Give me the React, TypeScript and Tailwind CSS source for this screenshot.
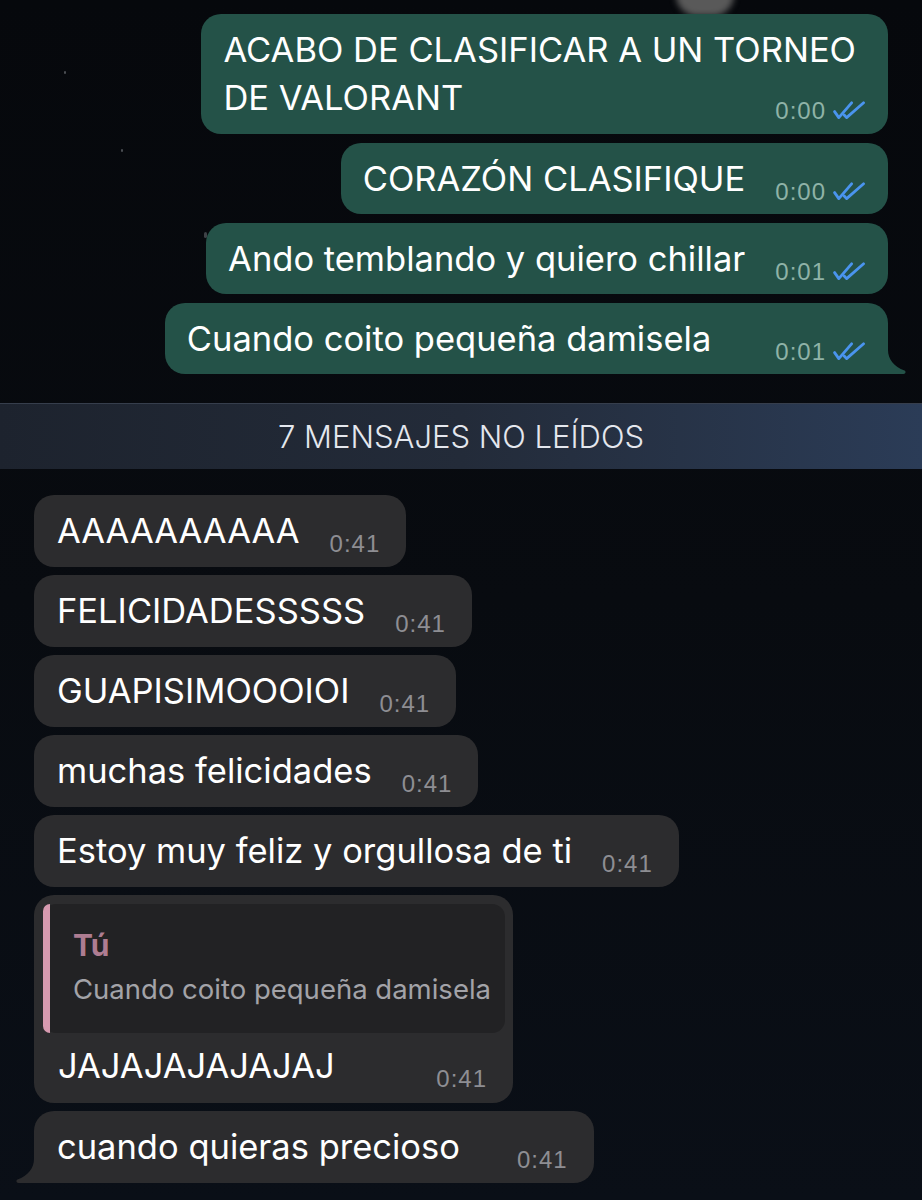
import React from "react";

const FONT = "font-['Inter','Liberation_Sans',Arial,sans-serif]";
const TIMEFONT = "font-['Liberation_Sans',Arial,sans-serif]";

function Checks() {
  return (
    <svg width="33" height="19" viewBox="0 0 33 19" fill="none" className="block">
      <path d="M1.6 10.6 L5.8 16.6 L18.6 1.8" stroke="#4a94ee" strokeWidth="2.8" strokeLinecap="round" strokeLinejoin="round" />
      <path d="M11.2 14 L13.6 16.6 L30.6 1.8" stroke="#4a94ee" strokeWidth="2.8" strokeLinecap="round" strokeLinejoin="round" />
    </svg>
  );
}

function OutTime({ time, wide }: { time: string; wide?: boolean }) {
  return (
    <span className={`mb-[1px] flex shrink-0 items-end gap-[7px] ${wide ? "ml-[64px]" : "ml-[30px]"} ${TIMEFONT}`}>
      <span className="text-[24px] leading-[18px] tracking-[1px] text-[#8fb3a7]">{time}</span>
      <Checks />
    </span>
  );
}

function Out({ text, time, tail, wide }: { text: string; time: string; tail?: boolean; wide?: boolean }) {
  return (
    <div
      className={`relative flex items-end rounded-[20px] bg-[#245248] pb-[12px] pl-[22px] pr-[22px] pt-[12px] ${
        tail ? "rounded-br-[4px]" : ""
      }`}
    >
      <span className="whitespace-nowrap text-[34.5px] leading-[47px] text-white">{text}</span>
      <OutTime time={time} wide={wide} />
      {tail && (
        <svg width="24" height="24" viewBox="0 0 24 24" className="absolute bottom-0 right-[-19px]">
          <path d="M5 0 C5 9 11 17 21.5 20.5 C23 21 23 24 20.5 24 L0 24 L0 0 Z" fill="#245248" />
        </svg>
      )}
    </div>
  );
}

function InTime({ time, wide }: { time: string; wide?: boolean }) {
  return (
    <span
      className={`mb-[1px] shrink-0 text-[24px] leading-[18px] tracking-[1px] text-[#8e8e93] ${
        wide ? "ml-[57px]" : "ml-[30px]"
      } ${TIMEFONT}`}
    >
      {time}
    </span>
  );
}

function In({ text, time, tail, wide }: { text: string; time: string; tail?: boolean; wide?: boolean }) {
  return (
    <div
      className={`relative flex items-end rounded-[20px] bg-[#2c2c2e] pb-[13px] pl-[23px] pr-[26px] pt-[12px] ${
        tail ? "rounded-bl-[4px]" : ""
      }`}
    >
      <span className="whitespace-nowrap text-[34.5px] leading-[47px] text-white">{text}</span>
      <InTime time={time} wide={wide} />
      {tail && (
        <svg width="24" height="24" viewBox="0 0 24 24" className="absolute bottom-0 left-[-19px]">
          <path d="M19 0 C19 9 13 17 2.5 20.5 C1 21 1 24 3.5 24 L24 24 L24 0 Z" fill="#2c2c2e" />
        </svg>
      )}
    </div>
  );
}

export default function App() {
  return (
    <div className={`relative h-[1200px] w-full overflow-hidden bg-linear-to-b from-[#06080c] via-[#080b10] to-[#0a0f17] ${FONT}`}>
      {/* wallpaper fragments */}
      <div className="absolute left-[676px] top-[-26px] h-[42px] w-[58px] rounded-full bg-[#595959] blur-[3px]" />
      <div className="absolute left-[64px] top-[71px] h-[3px] w-[2px] rounded-full bg-[#4a4d52]" />
      <div className="absolute left-[121px] top-[149px] h-[3px] w-[2px] rounded-full bg-[#4a4d52]" />
      <div className="absolute left-[204px] top-[232px] h-[6px] w-[3px] rounded-full bg-[#3e4247]" />

      <div className="relative flex flex-col items-end gap-[9px] px-[34px] pt-[14px]">
        <div className="flex flex-col rounded-[20px] bg-[#245248] pb-[13px] pl-[22px] pr-[22px] pt-[12px]">
          <p className="pr-[10px] text-[34.5px] leading-[48px] text-white">
            ACABO DE CLASIFICAR A UN TORNEO
            <br />
            DE VALORANT
          </p>
          <div className="-mt-[20px] flex h-[19px] items-end self-end">
            <OutTime time="0:00" />
          </div>
        </div>
        <Out text="CORAZÓN CLASIFIQUE" time="0:00" />
        <Out text="Ando temblando y quiero chillar" time="0:01" />
        <Out text="Cuando coito pequeña damisela" time="0:01" tail wide />
      </div>

      <div className="relative mt-[29px] flex h-[66px] items-center justify-center border-t border-[#363e4c] bg-linear-to-r from-[#1d232e] via-[#232b39] to-[#2b3c57]">
        <span className="text-[31px] font-light leading-none text-[#e4e7ee]">7 MENSAJES NO LEÍDOS</span>
      </div>

      <div className="relative mt-[26px] flex flex-col items-start gap-[8px] px-[34px]">
        <In text="AAAAAAAAAA" time="0:41" />
        <In text="FELICIDADESSSSS" time="0:41" />
        <In text="GUAPISIMOOOIOI" time="0:41" />
        <In text="muchas felicidades" time="0:41" />
        <In text="Estoy muy feliz y orgullosa de ti" time="0:41" />

        <div className="flex flex-col rounded-[20px] bg-[#2c2c2e] pb-[14px] pl-[9px] pr-[8px] pt-[9px]">
          <div className="flex rounded-[13px] bg-[#222224]">
            <div className="w-[7px] shrink-0 rounded-l-[13px] bg-[#d79ab0]" />
            <div className="flex flex-col pb-[24px] pl-[23px] pr-[14px] pt-[23px]">
              <span className="text-[30px] font-bold leading-[36px] text-[#ae7d92]">Tú</span>
              <span className="mt-[6px] whitespace-nowrap text-[27.5px] leading-[40px] text-[#a3a3a8]">
                Cuando coito pequeña damisela
              </span>
            </div>
          </div>
          <div className="mt-[9px] flex items-end justify-between pl-[15px] pr-[18px]">
            <span className="text-[34.5px] leading-[47px] text-white">JAJAJAJAJAJAJ</span>
            <InTime time="0:41" />
          </div>
        </div>

        <In text="cuando quieras precioso" time="0:41" tail wide />
      </div>
    </div>
  );
}
